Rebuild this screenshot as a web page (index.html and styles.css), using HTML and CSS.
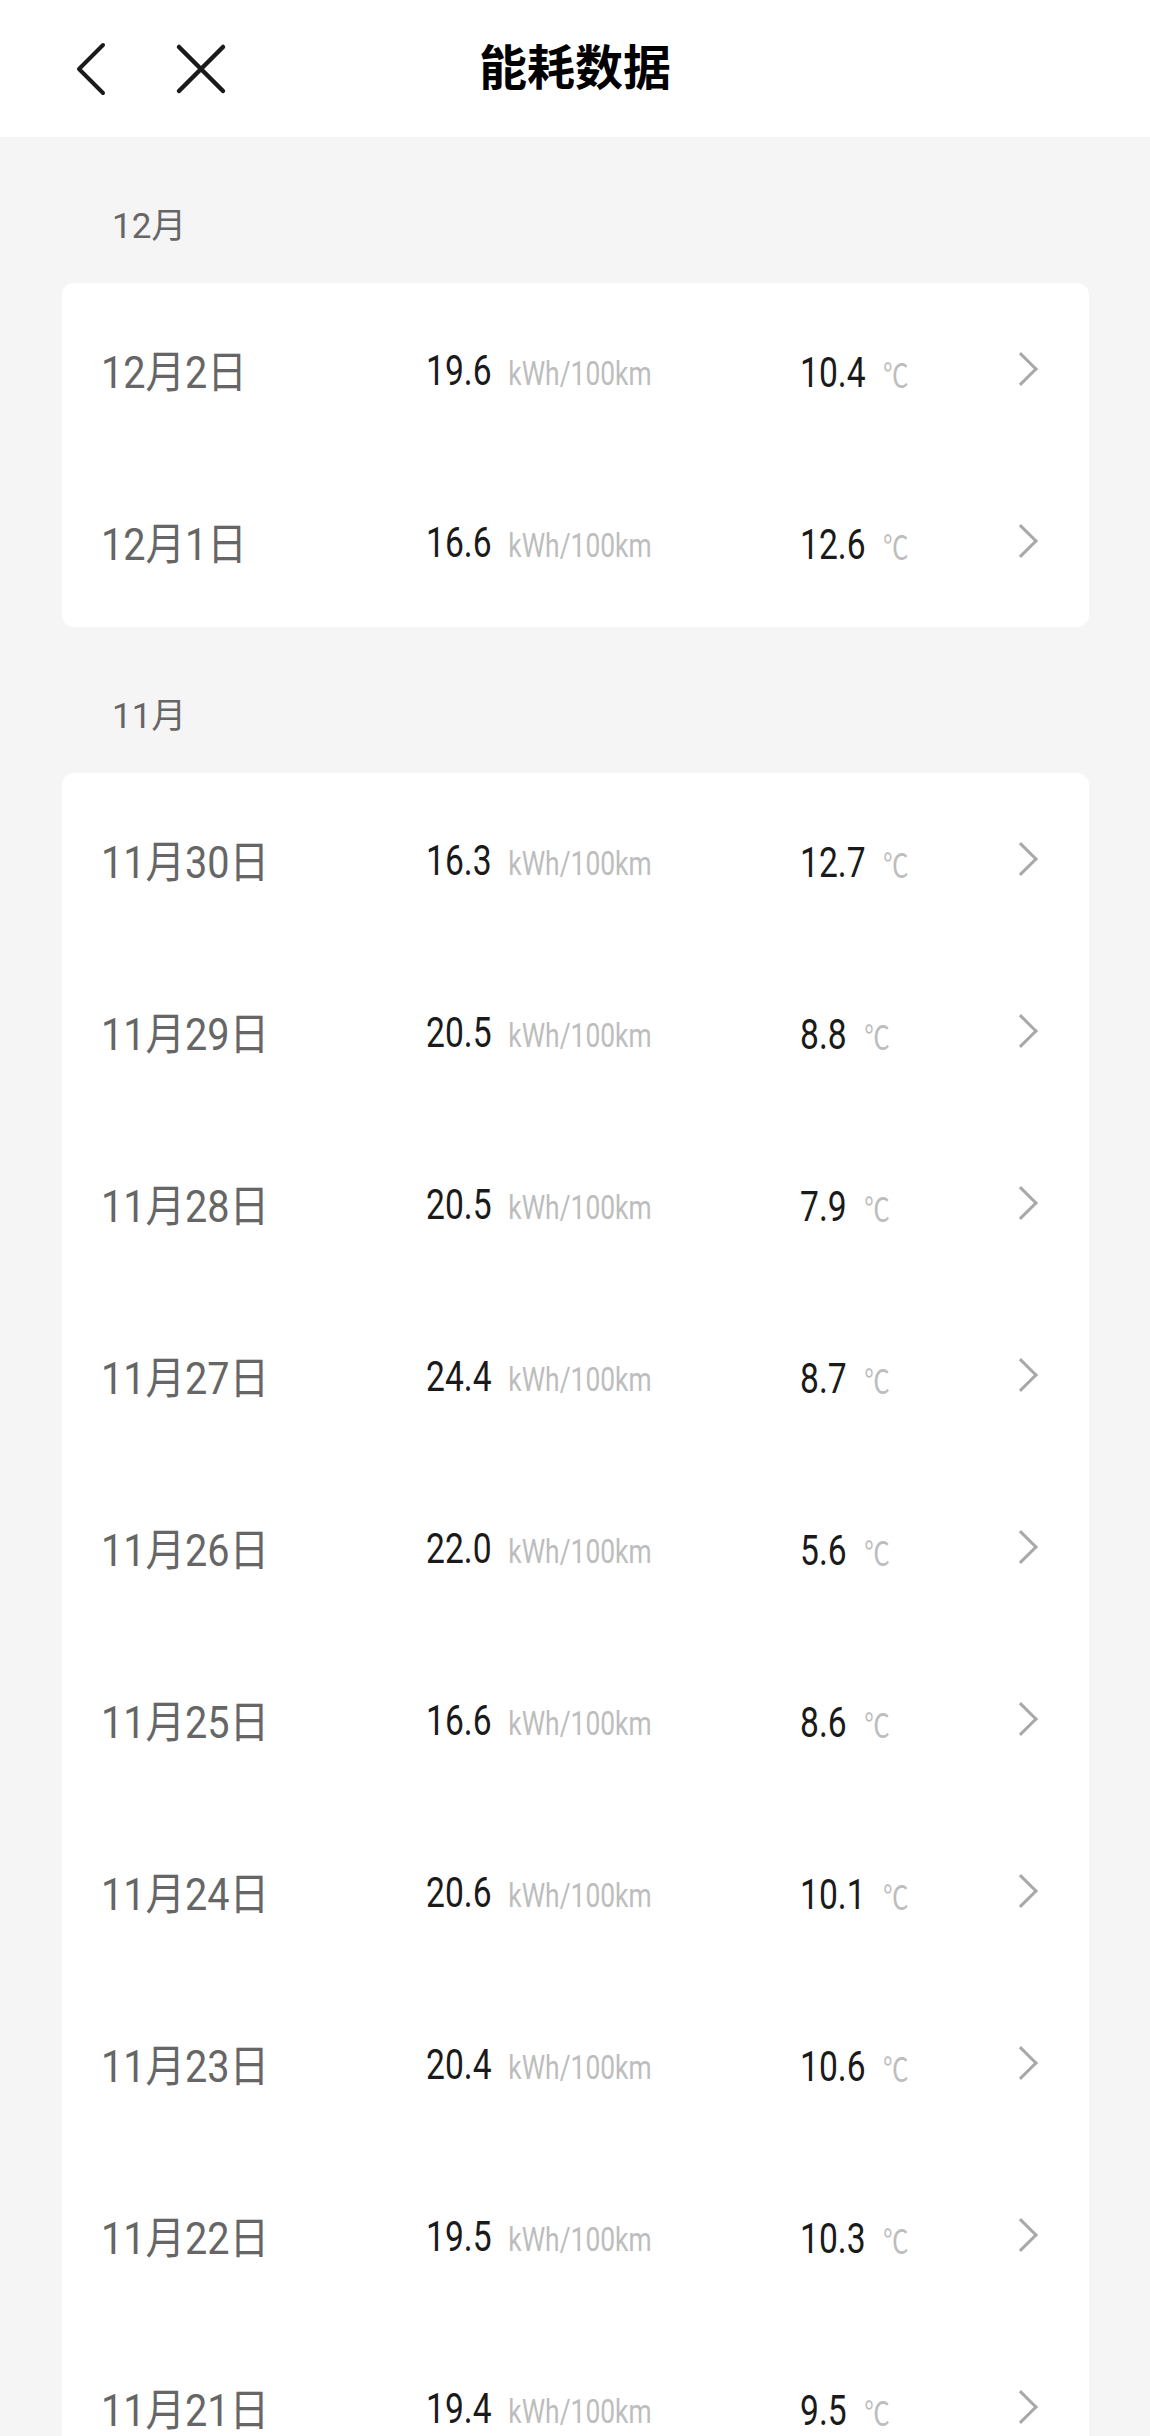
FILE: index.html
```html
<!DOCTYPE html>
<html>

<head>
  <meta name="viewport" content="width=device-width,initial-scale=1.0">
  <title>能耗数据</title>
  <link rel="stylesheet" href="styles.css">
</head>

<body>

  <header class="topbar">
    <div class="topbar-left">
      <svg class="icon-back" width="40" height="56" viewBox="0 0 40 56">
        <path d="M32 4 L8 28 L32 52" fill="none" stroke="#1a1a1a" stroke-width="4" stroke-linecap="round" stroke-linejoin="round" />
      </svg>
      <svg class="icon-close" width="52" height="52" viewBox="0 0 52 52">
        <path d="M4 4 L48 48 M48 4 L4 48" fill="none" stroke="#1a1a1a" stroke-width="4.5" stroke-linecap="round" />
      </svg>
    </div>
    <h1 class="title">能耗数据</h1>
    <div></div>
  </header>

  <section class="month">
    <p class="month-label">12月</p>
    <ul class="card">
      <li class="row"><span class="date">12月2日</span><span class="num">19.6<small class="unit">kWh/100km</small></span><span class="num">10.4<small class="deg">℃</small></span><i class="arrow"></i></li>
      <li class="row"><span class="date">12月1日</span><span class="num">16.6<small class="unit">kWh/100km</small></span><span class="num">12.6<small class="deg">℃</small></span><i class="arrow"></i></li>
    </ul>
  </section>

  <section class="month">
    <p class="month-label">11月</p>
    <ul class="card">
      <li class="row"><span class="date">11月30日</span><span class="num">16.3<small class="unit">kWh/100km</small></span><span class="num">12.7<small class="deg">℃</small></span><i class="arrow"></i></li>
      <li class="row"><span class="date">11月29日</span><span class="num">20.5<small class="unit">kWh/100km</small></span><span class="num">8.8<small class="deg">℃</small></span><i class="arrow"></i></li>
      <li class="row"><span class="date">11月28日</span><span class="num">20.5<small class="unit">kWh/100km</small></span><span class="num">7.9<small class="deg">℃</small></span><i class="arrow"></i></li>
      <li class="row"><span class="date">11月27日</span><span class="num">24.4<small class="unit">kWh/100km</small></span><span class="num">8.7<small class="deg">℃</small></span><i class="arrow"></i></li>
      <li class="row"><span class="date">11月26日</span><span class="num">22.0<small class="unit">kWh/100km</small></span><span class="num">5.6<small class="deg">℃</small></span><i class="arrow"></i></li>
      <li class="row"><span class="date">11月25日</span><span class="num">16.6<small class="unit">kWh/100km</small></span><span class="num">8.6<small class="deg">℃</small></span><i class="arrow"></i></li>
      <li class="row"><span class="date">11月24日</span><span class="num">20.6<small class="unit">kWh/100km</small></span><span class="num">10.1<small class="deg">℃</small></span><i class="arrow"></i></li>
      <li class="row"><span class="date">11月23日</span><span class="num">20.4<small class="unit">kWh/100km</small></span><span class="num">10.6<small class="deg">℃</small></span><i class="arrow"></i></li>
      <li class="row"><span class="date">11月22日</span><span class="num">19.5<small class="unit">kWh/100km</small></span><span class="num">10.3<small class="deg">℃</small></span><i class="arrow"></i></li>
      <li class="row"><span class="date">11月21日</span><span class="num">19.4<small class="unit">kWh/100km</small></span><span class="num">9.5<small class="deg">℃</small></span><i class="arrow"></i></li>
    </ul>
  </section>

</body>

</html>
```

FILE: styles.css
```css
body {
  margin: 0;
  background: #f5f5f5;
  font-family: Roboto, "Noto Sans CJK SC", sans-serif;
  color: #1a1a1a;
}

.topbar {
  height: 137px;
  background: #fff;
  display: grid;
  grid-template-columns: 1fr auto 1fr;
  align-items: center;
}

.topbar-left {
  display: flex;
  align-items: center;
  padding-left: 71px;
  gap: 64px;
}

.icon-back,
.icon-close {
  display: block;
}

.title {
  margin: 0 0 10px;
  font-family: "Noto Sans CJK SC", sans-serif;
  font-size: 48px;
  font-weight: bold;
  color: #000;
}

.month-label {
  margin: 0;
  padding: 70px 0 36px 112px;
  font-size: 35px;
  line-height: 40px;
  color: #666;
}

.card {
  list-style-type: none;
  margin: 0 61px 0 62px;
  padding: 0 48px 0 39px;
  background: #fff;
  border-radius: 12px;
}

.row {
  box-sizing: border-box;
  height: 172px;
  padding-top: 7px;
  display: grid;
  grid-template-columns: 325px 374px 1fr auto;
  align-items: center;
  line-height: 60px;
}

/* the app font is a narrow face, so squeeze Roboto a little */
.date,
.num {
  white-space: nowrap;
  transform-origin: left center;
}

.date {
  font-size: 44px;
  color: #666;
  transform: scaleX(0.9);
}

.num {
  font-size: 42px;
  color: #1a1a1a;
  transform: scaleX(0.8);
}

.unit {
  margin-left: 21px;
  font-size: 33px;
  color: #bdbdbd;
}

.deg {
  margin-left: 22px;
  font-family: "Noto Sans CJK SC", sans-serif;
  font-size: 32px;
  color: #bdbdbd;
}

.arrow {
  display: block;
  width: 21px;
  height: 21px;
  margin: 0 8px 7px 0;
  border-top: 3.5px solid #a8a8a8;
  border-right: 3.5px solid #a8a8a8;
  transform: rotate(45deg);
}
```
